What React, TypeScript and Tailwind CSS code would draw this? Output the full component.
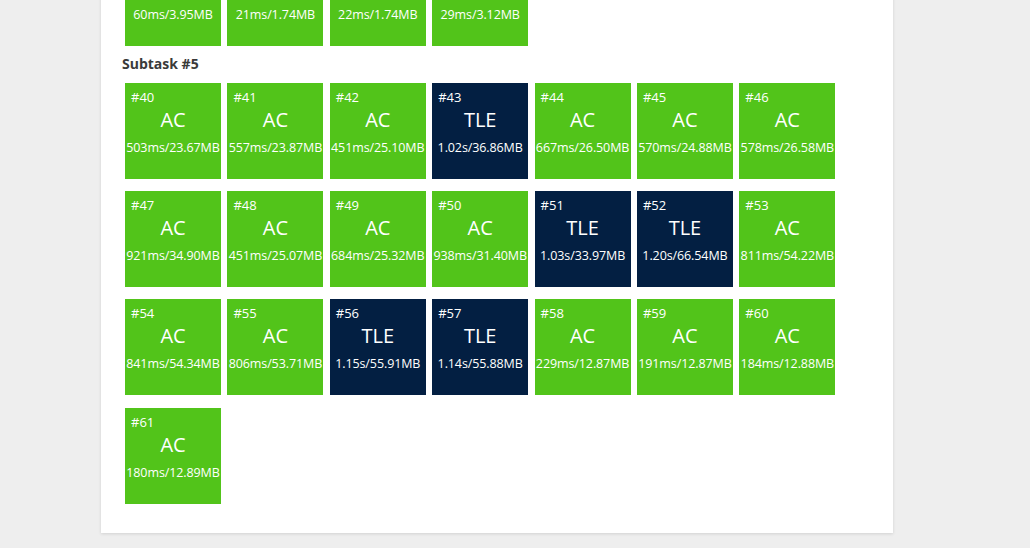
import React from 'react';

// case results: [id, status, time/memory]
type Case = [number, 'AC' | 'TLE', string];

const prevRow: Case[] = [
  [36, 'AC', '60ms/3.95MB'],
  [37, 'AC', '21ms/1.74MB'],
  [38, 'AC', '22ms/1.74MB'],
  [39, 'AC', '29ms/3.12MB'],
];

const subtask5: Case[] = [
  [40, 'AC', '503ms/23.67MB'],
  [41, 'AC', '557ms/23.87MB'],
  [42, 'AC', '451ms/25.10MB'],
  [43, 'TLE', '1.02s/36.86MB'],
  [44, 'AC', '667ms/26.50MB'],
  [45, 'AC', '570ms/24.88MB'],
  [46, 'AC', '578ms/26.58MB'],
  [47, 'AC', '921ms/34.90MB'],
  [48, 'AC', '451ms/25.07MB'],
  [49, 'AC', '684ms/25.32MB'],
  [50, 'AC', '938ms/31.40MB'],
  [51, 'TLE', '1.03s/33.97MB'],
  [52, 'TLE', '1.20s/66.54MB'],
  [53, 'AC', '811ms/54.22MB'],
  [54, 'AC', '841ms/54.34MB'],
  [55, 'AC', '806ms/53.71MB'],
  [56, 'TLE', '1.15s/55.91MB'],
  [57, 'TLE', '1.14s/55.88MB'],
  [58, 'AC', '229ms/12.87MB'],
  [59, 'AC', '191ms/12.87MB'],
  [60, 'AC', '184ms/12.88MB'],
  [61, 'AC', '180ms/12.89MB'],
];

const Tile = ({ c }: { c: Case }) => {
  const [id, status, usage] = c;
  return (
    <div
      className={
        'w-[96px] h-[96px] text-white flex flex-col ' +
        (status === 'AC' ? 'bg-[#52c41a]' : 'bg-[#031f42]')
      }
    >
      <div className="pt-[5px] pl-[6px] text-[13px] leading-[18px]">#{id}</div>
      <div className="mt-[1px] text-center text-[20px] leading-[26px]">{status}</div>
      <div className="mt-[6px] text-center text-[12.5px] leading-[18px] whitespace-nowrap tracking-[-0.1px]">
        {usage}
      </div>
    </div>
  );
};

const Grid = ({ cases }: { cases: Case[] }) => (
  <div className="grid grid-cols-[repeat(7,96px)] gap-x-[6.4px] gap-y-[12.2px] ml-[24px]">
    {cases.map((c) => (
      <Tile key={c[0]} c={c} />
    ))}
  </div>
);

export default function App() {
  return (
    <div
      className="w-[1030px] h-[548px] overflow-hidden bg-[#eeeeee]"
      style={{ fontFamily: '"Open Sans", "Noto Sans", sans-serif' }}
    >
      <div className="ml-[101px] w-[792px] -mt-[50px] bg-white pb-[29px] shadow-[0_1px_3px_rgba(0,0,0,0.12)]">
        <Grid cases={prevRow} />
        <div className="ml-[21px] mt-[8px] mb-[9px] h-[20px] leading-[20px] text-[14px] font-bold text-[#3a3a3a]">
          Subtask #5
        </div>
        <Grid cases={subtask5} />
      </div>
    </div>
  );
}
